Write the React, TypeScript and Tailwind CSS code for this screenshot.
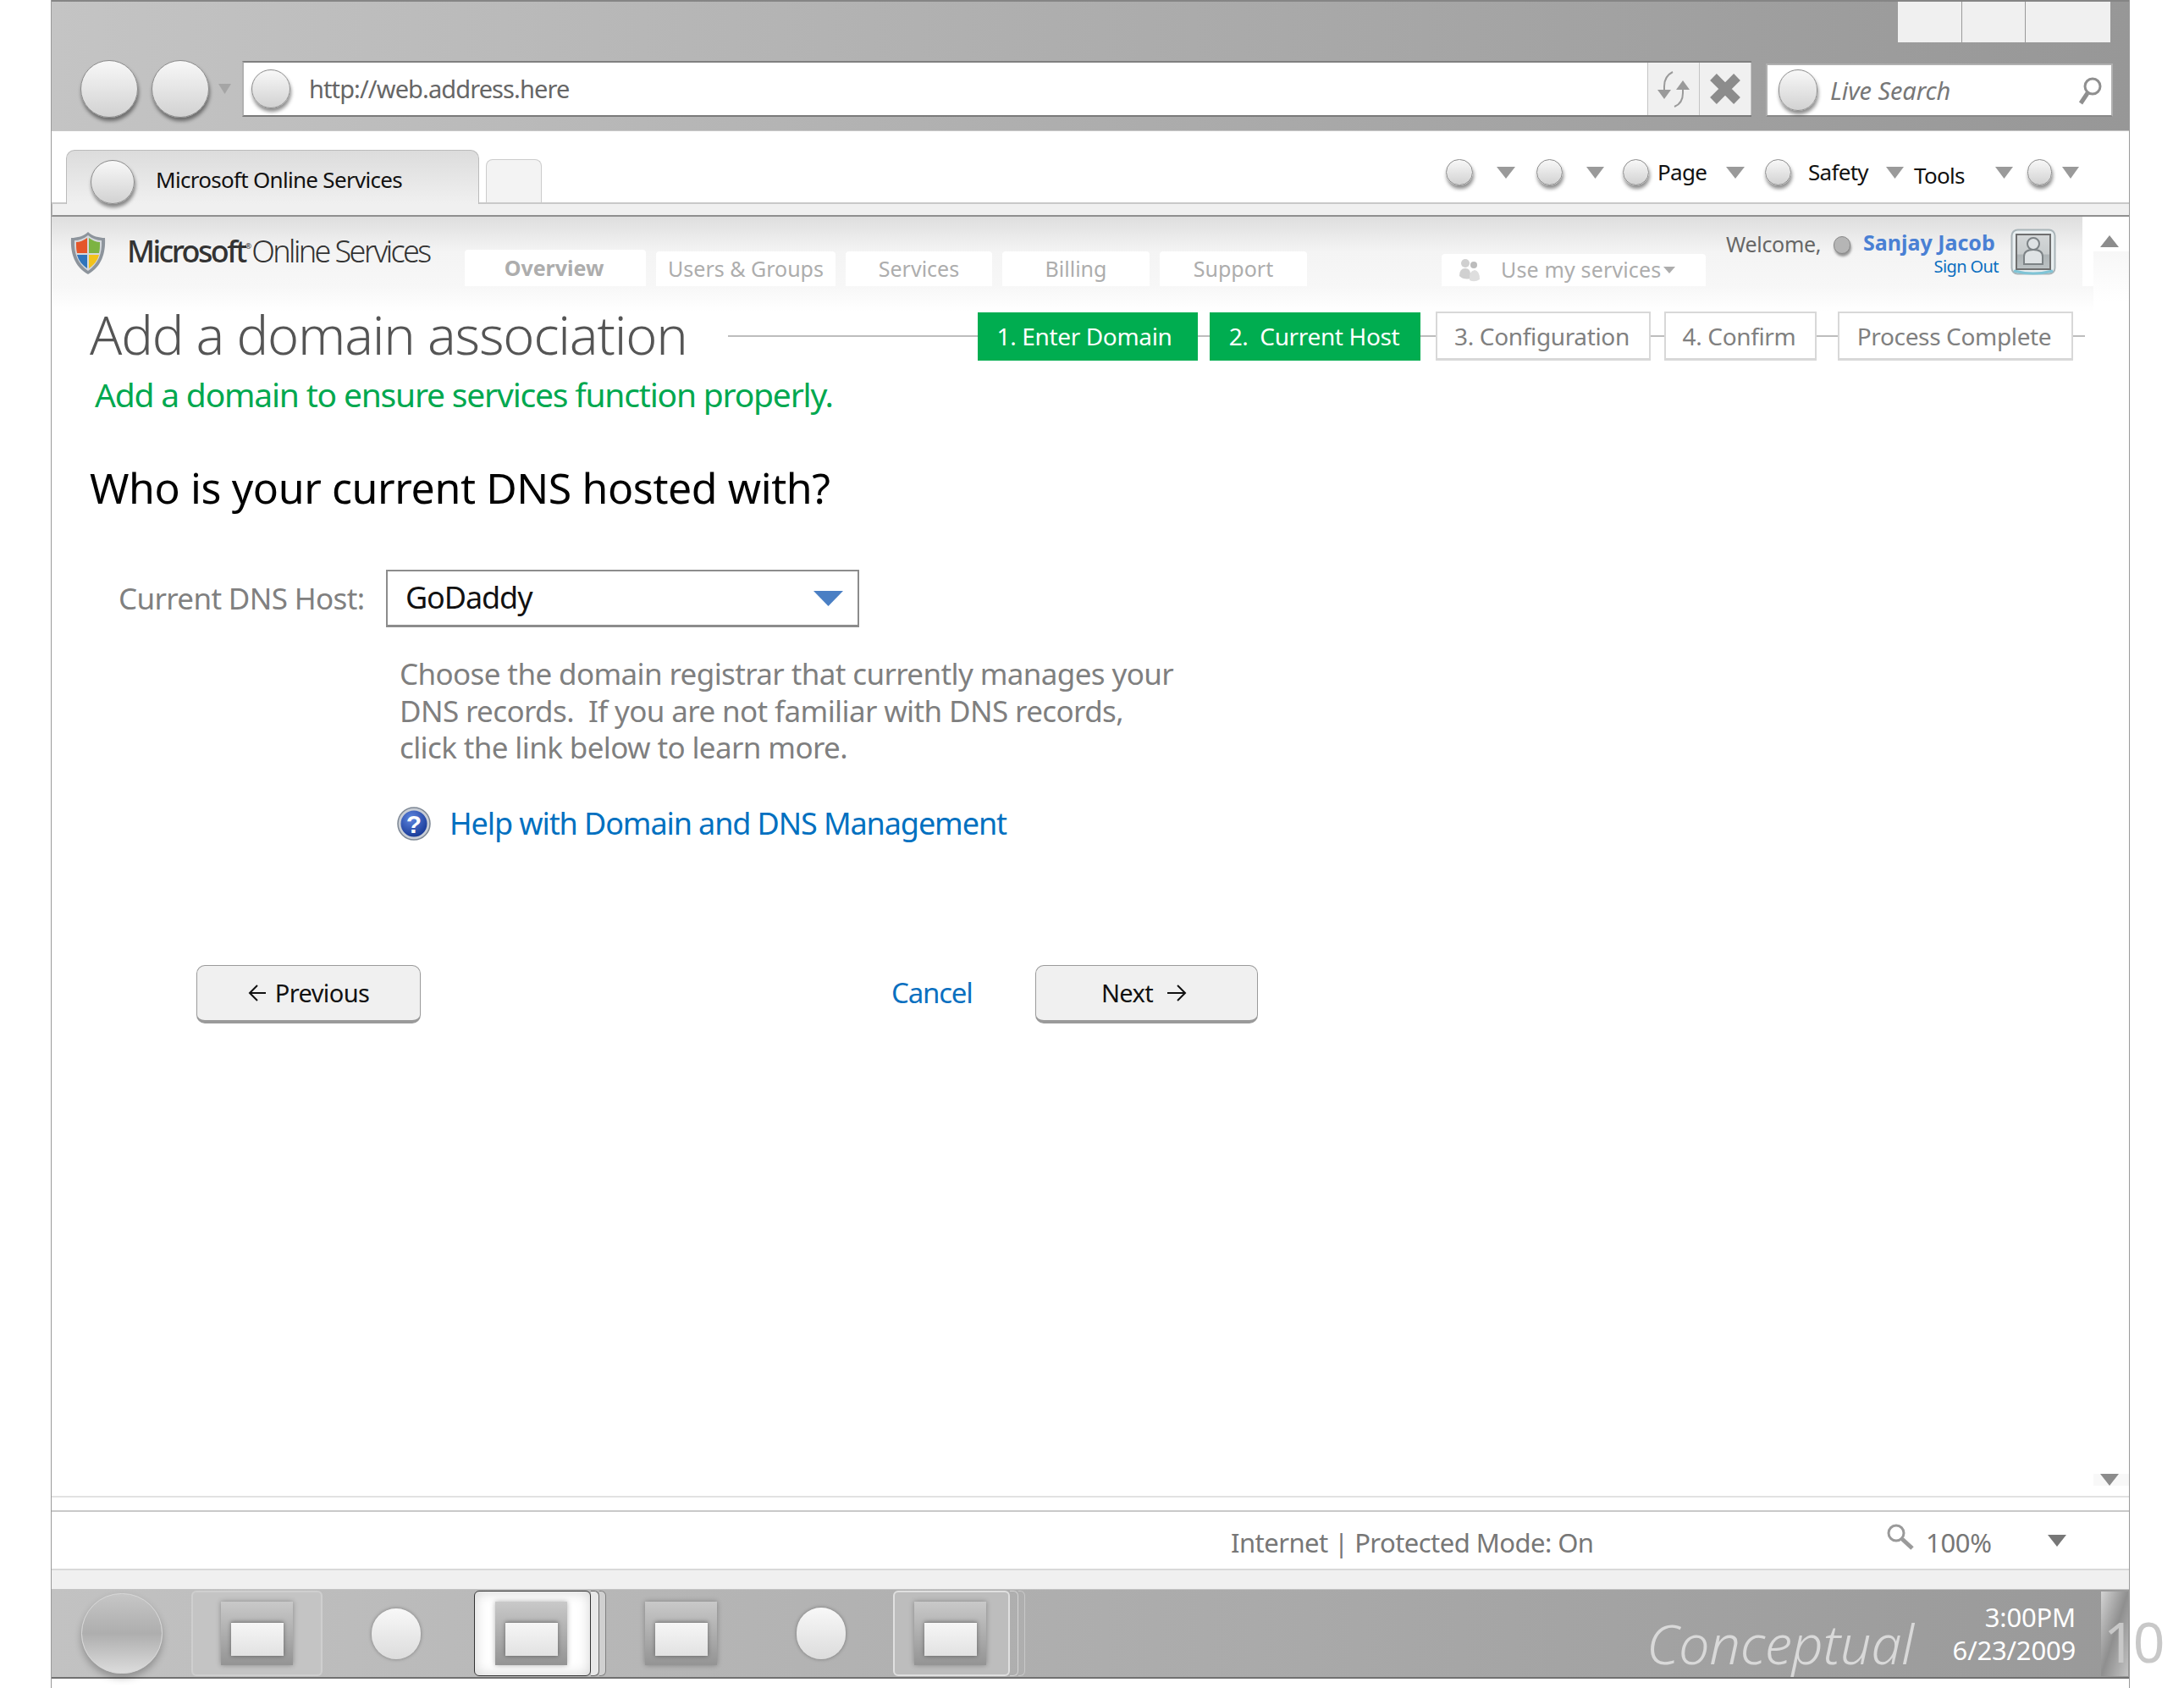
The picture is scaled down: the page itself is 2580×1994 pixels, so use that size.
import type { ReactNode } from "react";

function Orb({ className }: { className: string }) {
  return (
    <div className={`shrink-0 rounded-full border border-[#8c8c8c] bg-linear-to-b from-[#f8f8f8] to-[#d2d2d2] shadow-[1px_4px_4px_rgba(0,0,0,0.45)] ${className}`} />
  );
}

function Tri({ className, color = "#9a9a9a" }: { className: string; color?: string }) {
  return (
    <svg className={`shrink-0 ${className}`} viewBox="0 0 20 14" preserveAspectRatio="none">
      <polygon points="0,0 20,0 10,14" fill={color} />
    </svg>
  );
}

function Shield() {
  return (
    <svg width="44" height="52" viewBox="0 0 44 52" className="shrink-0">
      <path d="M22 1 C17 6 9 8 2 8 C1 26 6 42 22 51 C38 42 43 26 42 8 C35 8 27 6 22 1Z" fill="#8d949c" />
      <path d="M22 5 C17 9 11 11 6 11 C5 26 10 39 22 47 C34 39 39 26 38 11 C33 11 27 9 22 5Z" fill="#d4d8dc" />
      <path d="M21 8 C17 11 12 13 8 13 C8 18 8 22 9 26 L21 26Z" fill="#e4562a" />
      <path d="M23 8 C27 11 32 13 36 13 C36 18 36 22 35 26 L23 26Z" fill="#7cb342" />
      <path d="M9 28 L21 28 L21 44 C15 40 11 35 9 28Z" fill="#2f74bb" />
      <path d="M35 28 L23 28 L23 44 C29 40 33 35 35 28Z" fill="#f2c21b" />
    </svg>
  );
}

function Avatar() {
  return (
    <svg width="54" height="56" viewBox="0 0 54 56" className="shrink-0">
      <defs>
        <linearGradient id="avatarBg" x1="0" y1="0" x2="0" y2="1">
          <stop offset="0" stopColor="#d4d7d8" />
          <stop offset="0.55" stopColor="#c8cccd" />
          <stop offset="0.6" stopColor="#aeb4b6" />
          <stop offset="1" stopColor="#bcc2c4" />
        </linearGradient>
      </defs>
      <rect x="1.5" y="1.5" width="51" height="52" rx="7" fill="#e8eef0" stroke="#a9b4b8" strokeWidth="2" />
      <path d="M4 50 Q27 56 50 50" stroke="#7fc4d6" strokeWidth="3" fill="none" />
      <rect x="7" y="7" width="40" height="41" fill="url(#avatarBg)" stroke="#6f6f6f" strokeWidth="2" />
      <circle cx="27" cy="18" r="7" fill="#dfe3e5" stroke="#7d8386" strokeWidth="2" />
      <path d="M16 42 V33 Q16 25 27 25 Q38 25 38 33 V42Z" fill="#dfe3e5" stroke="#7d8386" strokeWidth="2" />
    </svg>
  );
}

function HelpIcon() {
  return (
    <svg width="40" height="44" viewBox="0 0 40 44" className="shrink-0">
      <defs>
        <radialGradient id="helpBlue" cx="0.4" cy="0.3" r="0.8">
          <stop offset="0" stopColor="#5f86e0" />
          <stop offset="1" stopColor="#10318f" />
        </radialGradient>
      </defs>
      <circle cx="20" cy="22" r="19" fill="#c9ced6" stroke="#7d8794" strokeWidth="1.5" />
      <circle cx="20" cy="22" r="15.5" fill="url(#helpBlue)" />
      <text x="20" y="33" textAnchor="middle" fontSize="30" fontWeight="700" fill="#fff" fontFamily="Liberation Sans, sans-serif">?</text>
    </svg>
  );
}

function HeaderTab({ width, bold, children }: { width: string; bold?: boolean; children: ReactNode }) {
  return (
    <div className={`flex h-[41px] items-center justify-center rounded-t-[4px] bg-white text-[25px] text-[#adadad] ${bold ? "font-bold" : ""} ${width}`}>
      {children}
    </div>
  );
}

function Step({ width, active, children }: { width: string; active?: boolean; children: ReactNode }) {
  return active ? (
    <div className={`flex h-[57px] shrink-0 items-center justify-center whitespace-pre bg-[#00ad50] text-[28px] tracking-[-0.35px] text-white ${width}`}>{children}</div>
  ) : (
    <div className={`flex h-[58px] shrink-0 items-center justify-center whitespace-pre border-2 border-b-[3px] border-[#d8d8d8] bg-white pr-[3px] text-[28px] tracking-[-0.35px] text-[#808080] ${width}`}>{children}</div>
  );
}

function StepLine({ width }: { width: string }) {
  return <div className={`h-[2px] shrink-0 bg-[#bdbdbd] ${width}`} />;
}

function NavButton({ className, children }: { className: string; children: ReactNode }) {
  return (
    <div className={`flex h-[69px] shrink-0 items-center justify-center rounded-[10px] border border-b-[4px] border-[#9a9a9a] bg-[#f0f0f0] text-[29px] tracking-[-0.6px] text-[#111] ${className}`}>
      {children}
    </div>
  );
}

function TaskIcon({ className }: { className: string }) {
  return (
    <div className={`flex h-[75px] w-[85px] shrink-0 items-end justify-center bg-linear-to-b from-[#c9c9c9] to-[#949494] pb-[11px] shadow-[0_0_6px_rgba(0,0,0,0.3)] ${className}`}>
      <div className="h-[40px] w-[62px] border-t border-[#8a8a8a] bg-linear-to-b from-[#f6f6f6] to-[#e2e2e2] shadow-[0_0_5px_rgba(0,0,0,0.4)]" />
    </div>
  );
}

export default function App() {
  return (
    <div className="flex h-[1994px] w-[2580px] overflow-hidden bg-white font-['Noto_Sans',sans-serif]">
      <div className="w-[60px] shrink-0" />
      <div className="flex h-full w-[2456px] shrink-0 flex-col border-x border-[#9a9a9a]">
        {/* browser chrome */}
        <div className="h-[155px] shrink-0 border-t-2 border-b border-t-[#858585] border-b-[#c8c8c8] bg-linear-to-r from-[#c4c4c4] to-[#979797]">
          <div className="flex h-[48px] justify-end gap-[1px] pr-[22px]">
            <div className="w-[75px] bg-[#f0f0f0]" />
            <div className="w-[74px] bg-[#f0f0f0]" />
            <div className="w-[100px] bg-[#f0f0f0]" />
          </div>
          <div className="mt-[22px] flex h-[66px] items-center pl-[34px]">
            <Orb className="h-[68px] w-[68px]" />
            <Orb className="ml-[16px] h-[68px] w-[68px]" />
            <Tri className="ml-[11px] h-[12px] w-[15px]" color="#a5a5a5" />
            <div className="ml-[13px] flex h-[66px] w-[1783px] shrink-0 items-center border-2 border-r-0 border-[#808080] border-b-[#7a7a7a] border-l-[#b0b0b0] bg-white pl-[9px]">
              <Orb className="h-[46px] w-[46px]" />
              <div className="ml-[22px] w-[1581px] text-[29px] tracking-[-0.9px] text-[#666]">http://web.address.here</div>
              <div className="flex h-full w-[62px] shrink-0 items-center justify-center border-x border-[#c4c4c4] bg-[#f0f0f0]">
                <svg width="50" height="46" viewBox="0 0 50 46" fill="none" stroke="#9a9a9a" strokeWidth="2">
                  <path d="M14 30 V20 Q14 8 24 3" />
                  <polygon points="6,24 22,24 14,35" fill="#9a9a9a" stroke="none" />
                  <path d="M36 18 V28 Q36 40 26 44" />
                  <polygon points="28,24 44,24 36,13" fill="#9a9a9a" stroke="none" />
                </svg>
              </div>
              <div className="flex h-full w-[61px] shrink-0 items-center justify-center border-r border-[#c4c4c4] bg-[#f0f0f0]">
                <svg width="38" height="38" viewBox="0 0 38 38" stroke="#8c8c8c" strokeWidth="11">
                  <path d="M5 5 L33 33 M33 5 L5 33" />
                </svg>
              </div>
            </div>
            <div className="ml-[17px] mt-[3px] flex h-[63px] w-[410px] shrink-0 items-center border-2 border-[#b0b0b0] border-b-[#888] bg-white pl-[13px]">
              <Orb className="h-[49px] w-[46px]" />
              <div className="ml-[15px] w-[292px] text-[29px] italic tracking-[-0.1px] text-[#777]">Live Search</div>
              <svg width="30" height="34" viewBox="0 0 30 34" fill="none" stroke="#8f8f8f" className="shrink-0">
                <circle cx="18" cy="12" r="9" strokeWidth="3" />
                <path d="M12 20 L4 32" strokeWidth="5" />
              </svg>
            </div>
          </div>
        </div>

        {/* tab row */}
        <div className="flex h-[86px] shrink-0 items-end border-b-2 border-[#c9c9c9] pl-[17px]">
          <div className="relative z-10 mb-[-2px] flex h-[64px] w-[488px] shrink-0 items-start rounded-t-[10px] border border-b-0 border-[#bbb] bg-linear-to-b from-[#dcdcdc] to-[#f0f0f0] pl-[28px] pt-[11px]">
            <Orb className="h-[52px] w-[52px]" />
            <div className="ml-[25px] mt-[4px] whitespace-nowrap text-[26px] tracking-[-0.7px] text-[#111]">Microsoft Online Services</div>
          </div>
          <div className="ml-[8px] h-[51px] w-[66px] shrink-0 rounded-t-[8px] border border-b-0 border-[#ccc] bg-[#f3f3f3]" />
          <div className="mb-[20px] ml-[1068px] flex h-[32px] items-center text-[26px] tracking-[-0.7px] text-[#111]">
            <Orb className="h-[31px] w-[32px]" />
            <Tri className="ml-[28px] mt-[2px] h-[14px] w-[22px]" />
            <Orb className="ml-[25px] h-[31px] w-[31px]" />
            <Tri className="ml-[28px] mt-[2px] h-[14px] w-[21px]" />
            <Orb className="ml-[22px] h-[31px] w-[31px]" />
            <div className="ml-[10px] w-[58px] leading-none">Page</div>
            <Tri className="ml-[23px] mt-[2px] h-[14px] w-[22px]" />
            <Orb className="ml-[24px] h-[31px] w-[31px]" />
            <div className="ml-[20px] w-[70px] leading-none">Safety</div>
            <Tri className="ml-[22px] mt-[2px] h-[14px] w-[21px]" />
            <div className="ml-[12px] mt-[8px] w-[63px] leading-none">Tools</div>
            <Tri className="ml-[33px] mt-[2px] h-[14px] w-[21px]" />
            <Orb className="ml-[17px] h-[31px] w-[29px]" />
            <Tri className="ml-[12px] mt-[2px] h-[14px] w-[20px]" />
          </div>
        </div>
        <div className="h-[15px] shrink-0 border-b-2 border-l border-[#8f8f8f] border-l-[#b5b5b5] bg-[#f0f0f0]" />

        {/* page area */}
        <div className="flex h-[1511px] shrink-0">
          <div className="w-[2412px] shrink-0">
            <div className="flex h-[82px] w-[2399px] bg-linear-to-b from-[#dedede] via-[#f4f4f4] to-[#f7f7f7] pl-[21px]">
              <div className="mt-[17px]"><Shield /></div>
              <div className="ml-[24px] mt-[17px] w-[358px] whitespace-nowrap text-[36px] leading-[48px] tracking-[-2.6px] text-[#333]">
                <span className="font-medium">Microsoft</span>
                <span className="relative top-[-16px] text-[9px] tracking-normal">®</span>
                <span className="font-light">Online Services</span>
              </div>
              <div className="ml-[41px] flex items-end gap-[12px] self-end">
                <HeaderTab width="w-[214px] h-[43px] pr-[3px]" bold>Overview</HeaderTab>
                <HeaderTab width="w-[212px]">Users &amp; Groups</HeaderTab>
                <HeaderTab width="w-[173px]">Services</HeaderTab>
                <HeaderTab width="w-[174px]">Billing</HeaderTab>
                <HeaderTab width="w-[174px]">Support</HeaderTab>
              </div>
              <div className="ml-[159px] flex h-[38px] w-[312px] shrink-0 items-center self-end rounded-t-[4px] bg-white pl-[18px] text-[25px] text-[#adadad]">
                <svg width="30" height="30" viewBox="0 0 30 30" fill="#d0d0d0" className="shrink-0">
                  <circle cx="10" cy="7" r="5" />
                  <circle cx="20" cy="9" r="4" fill="#bcbcbc" />
                  <path d="M3 22 Q3 13 10 13 Q16 13 16 20 L16 25 Q8 27 3 22Z" />
                  <path d="M15 27 Q14 16 21 15 Q27 16 27 26 Q21 30 15 27Z" fill="#dedede" />
                </svg>
                <span className="ml-[22px] whitespace-nowrap tracking-[0.15px]">Use my services</span>
                <Tri className="ml-[3px] h-[8px] w-[14px]" color="#adadad" />
              </div>
              <div className="ml-[24px] mt-[20px] w-[322px] shrink-0">
                <div className="flex h-[26px] items-center">
                  <div className="w-[127px] whitespace-nowrap text-[25px] tracking-[-0.3px] text-[#666]">Welcome,</div>
                  <div className="h-[21px] w-[20px] shrink-0 rounded-full border border-[#888] bg-[#b5b5b5] shadow-[1px_3px_3px_rgba(0,0,0,0.4)]" />
                  <div className="ml-[15px] mt-[-4px] whitespace-nowrap text-[25px] font-bold text-[#4a80d4]">Sanjay Jacob</div>
                </div>
                <div className="w-[322px] whitespace-nowrap text-right text-[20px] leading-[26px] tracking-[-0.6px] text-[#0a6fc0]">Sign Out</div>
              </div>
              <div className="ml-[14px] mt-[14px]"><Avatar /></div>
            </div>

            <div className="bg-linear-to-b from-[#f7f7f7] to-white to-[30px] pt-[30px]">
              <div className="flex h-[58px] items-center pl-[45px]">
                <div className="mb-[6px] w-[754px] shrink-0 whitespace-nowrap text-[63px] font-light leading-none tracking-[-1.15px] text-[#555]">Add a domain association</div>
                <StepLine width="w-[295px]" />
                <Step width="w-[260px] pr-[8px]" active>1. Enter Domain</Step>
                <StepLine width="w-[14px]" />
                <Step width="w-[249px] pr-[2px]" active>2.  Current Host</Step>
                <StepLine width="w-[18px]" />
                <Step width="w-[254px]">3. Configuration</Step>
                <StepLine width="w-[16px]" />
                <Step width="w-[180px]">4. Confirm</Step>
                <StepLine width="w-[25px]" />
                <Step width="w-[278px]">Process Complete</Step>
                <StepLine width="w-[14px]" />
              </div>
              <div className="mt-[15px] h-[50px] pl-[51px] text-[39px] leading-[50px] tracking-[-1.2px] text-[#00a84f]">Add a domain to ensure services function properly.</div>
              <div className="mt-[50px] h-[70px] pl-[45px] text-[50px] leading-[70px] tracking-[-0.4px] text-black">Who is your current DNS hosted with?</div>
              <div className="mt-[62px] flex h-[68px] items-center pl-[79px]">
                <div className="w-[316px] shrink-0 whitespace-nowrap text-[35px] tracking-[-0.65px] text-[#808080]">Current DNS Host:</div>
                <div className="flex h-[68px] w-[559px] shrink-0 items-center border-2 border-b-[3px] border-[#8c8c8c] pl-[21px] pr-[17px]">
                  <div className="mb-[2px] flex-1 text-[36px] tracking-[-1.1px] text-[#111]">GoDaddy</div>
                  <Tri className="h-[18px] w-[35px]" color="#4a7fc4" />
                </div>
              </div>
              <div className="mt-[33px] pl-[411px] text-[35px] leading-[43.5px] tracking-[-0.62px] text-[#7f7f7f] whitespace-pre">
                {"Choose the domain registrar that currently manages your\nDNS records.  If you are not familiar with DNS records,\nclick the link below to learn more."}
              </div>
              <div className="mt-[46px] flex h-[44px] items-center pl-[408px]">
                <HelpIcon />
                <div className="ml-[22px] whitespace-nowrap text-[36px] tracking-[-1.1px] text-[#0070c0]">Help with Domain and DNS Management</div>
              </div>
              <div className="mt-[145px] flex items-start pl-[171px]">
                <NavButton className="w-[265px] gap-[10px]">
                  <svg width="22" height="22" viewBox="0 0 22 22" fill="none" stroke="#111" strokeWidth="2"><path d="M21 11 H2 M11 2 L2 11 L11 20" /></svg>
                  Previous
                </NavButton>
                <div className="ml-[556px] mt-[10px] w-[94px] whitespace-nowrap text-[33px] leading-[46px] tracking-[-1.2px] text-[#0a70c0]">Cancel</div>
                <NavButton className="ml-[76px] w-[263px] gap-[16px] pr-[6px]">
                  Next
                  <svg width="24" height="22" viewBox="0 0 24 22" fill="none" stroke="#111" strokeWidth="2"><path d="M1 11 H22 M13 2 L22 11 L13 20" /></svg>
                </NavButton>
              </div>
            </div>
          </div>
          <div className="flex w-[42px] shrink-0 flex-col items-center pt-[22px]">
            <svg width="22" height="14" viewBox="0 0 22 14" className="mr-[5px] shrink-0"><polygon points="11,0 22,14 0,14" fill="#8c8c8c" /></svg>
            <div className="mt-[5px] w-full flex-1 bg-linear-to-b from-[#f7f7f7] to-white to-[60px]" />
            <div className="mb-[12px] w-full bg-[#f8f8f8] pl-[8px]">
              <svg width="22" height="14" viewBox="0 0 22 14" className="block"><polygon points="0,0 22,0 11,14" fill="#8c8c8c" /></svg>
            </div>
          </div>
        </div>

        {/* status bar */}
        <div className="h-[17px] shrink-0 border-t-2 border-[#e2e2e2]" />
        <div className="flex h-[69px] shrink-0 items-center border-t-2 border-[#c9c9c9] pl-[1393px] text-[31px] tracking-[-0.55px] text-[#777]">
          <div className="mt-[6px] w-[774px] whitespace-nowrap">Internet | Protected Mode: On</div>
          <svg width="34" height="32" viewBox="0 0 34 32" fill="none" stroke="#9a9a9a" className="mb-[10px] shrink-0">
            <circle cx="12" cy="12" r="9" strokeWidth="3" />
            <path d="M19 19 L31 30" strokeWidth="5" />
          </svg>
          <div className="ml-[13px] mt-[6px] w-[144px] whitespace-nowrap tracking-[-0.3px]">100%</div>
          <Tri className="h-[14px] w-[22px]" color="#777" />
        </div>
        <div className="h-[24px] shrink-0 border-t-2 border-[#d9d9d9] bg-[#f0f0f0]" />

        {/* taskbar */}
        <div className="flex h-[106px] shrink-0 items-center border-y border-b-2 border-t-[#c4c4c4] border-b-[#707070] bg-linear-to-r from-[#c2c2c2] to-[#999] pl-[35px]">
          <div className="h-[95px] w-[96px] shrink-0 rounded-full border border-[#d8d8d8] bg-linear-to-b from-[#c6c6c6] via-[#aeaeae] to-[#dcdcdc] shadow-[0_5px_8px_rgba(0,0,0,0.25)]" />
          <div className="ml-[34px] flex h-[101px] w-[155px] shrink-0 items-center justify-center rounded-[6px] border-2 border-[#cfcfcf] bg-[#c4c4c4]">
            <TaskIcon className="" />
          </div>
          <div className="ml-[58px] h-[60px] w-[58px] shrink-0 rounded-full bg-linear-to-b from-[#f8f8f8] to-[#dcdcdc] shadow-[0_0_4px_rgba(0,0,0,0.35)]" />
          <div className="ml-[63px] flex h-[101px] w-[156px] shrink-0">
            <div className="flex h-full w-[138px] shrink-0 items-center justify-center rounded-[6px] border border-[#333] bg-white pr-[3px] shadow-[inset_0_0_16px_rgba(0,0,0,0.18)]">
              <TaskIcon className="" />
            </div>
            <div className="h-full w-[10px] shrink-0 rounded-r-[6px] border-y border-r border-[#666] bg-[#e8e8e8]" />
            <div className="h-full w-[8px] shrink-0 rounded-r-[6px] border-y border-r border-[#808080] bg-[#d0d0d0]" />
          </div>
          <TaskIcon className="ml-[46px]" />
          <div className="ml-[94px] h-[61px] w-[58px] shrink-0 rounded-full bg-linear-to-b from-[#f8f8f8] to-[#dcdcdc] shadow-[0_0_4px_rgba(0,0,0,0.35)]" />
          <div className="ml-[56px] flex h-[101px] w-[156px] shrink-0">
            <div className="flex h-full w-[138px] shrink-0 items-center justify-center rounded-[6px] border-2 border-[#e0e0e0] bg-[#bdbdbd] pr-[3px]">
              <TaskIcon className="" />
            </div>
            <div className="h-full w-[10px] shrink-0 rounded-r-[6px] border-y border-r border-[#d4d4d4]" />
            <div className="h-full w-[8px] shrink-0 rounded-r-[6px] border-y border-r border-[#c8c8c8]" />
          </div>
          <div className="ml-[734px] mt-[24px] w-[319px] shrink-0 whitespace-nowrap text-[65px] font-light italic leading-none tracking-[-0.4px] text-[#d9d9d9]">Conceptual</div>
          <div className="ml-[30px] w-[158px] shrink-0 whitespace-nowrap text-right text-[31px] leading-[39px] tracking-[-0.2px] text-white">
            <div>3:00PM</div>
            <div>6/23/2009</div>
          </div>
          <div className="ml-[30px] flex h-[100px] w-[32px] shrink-0 items-center bg-linear-to-br from-[#d4d4d4] via-[#8f8f8f] to-[#c4c4c4] pl-[3px] pt-[16px]">
            <div className="text-[66px] leading-none tracking-[-3px] text-[#c8c8c8]">10</div>
          </div>
        </div>
      </div>
    </div>
  );
}
